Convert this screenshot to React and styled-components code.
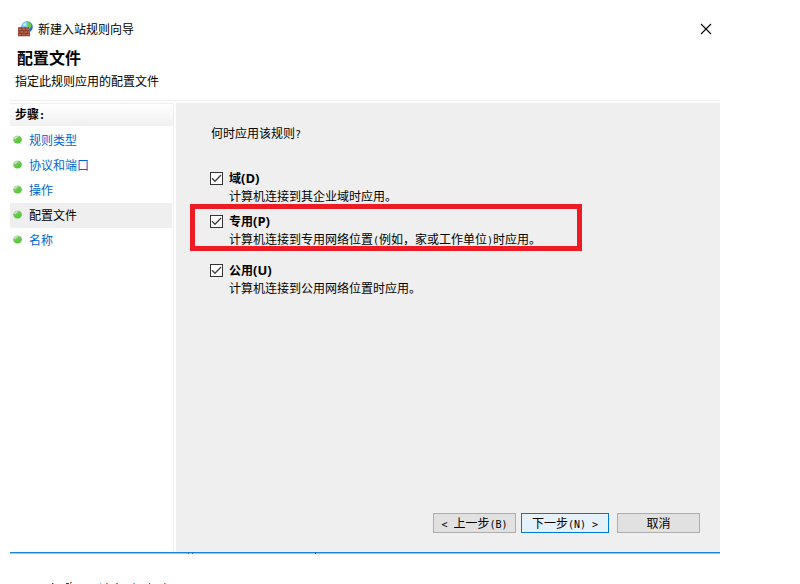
import React, { useState } from 'react';
import styled, { createGlobalStyle, css } from 'styled-components';

const GlobalStyle = createGlobalStyle`
  * {
    box-sizing: border-box;
  }

  body {
    margin: 0;
    background: #fff;
    color: #000;
    font-family: 'Noto Sans CJK SC', 'Liberation Sans', sans-serif;
    font-size: 12px;
    line-height: 18px;
  }
`;

const Page = styled.div`
  display: flex;
  flex-direction: column;
  min-height: 100vh;
  padding: 19px 80px 0 10px;
`;

const Wizard = styled.main`
  display: flex;
  flex: 1;
  flex-direction: column;
  border-bottom: 1px solid #1883d7;
  box-shadow: 0 1px 0 #bfbfbf;
`;

const TitleBar = styled.div`
  display: flex;
  align-items: center;
  gap: 5px;
  height: 20px;
  padding: 0 8px 0 7px;
`;

const Title = styled.span`
  flex: 1;
`;

const CloseButton = styled.button`
  display: flex;
  padding: 0;
  border: none;
  background: none;
`;

const Header = styled.header`
  padding: 6px 5px 10px;
  border-bottom: 1px solid #efefef;
`;

const Heading = styled.h1`
  margin: 0 0 3px;
  padding-left: 2px;
  font-size: 16px;
  font-weight: 700;
  line-height: 24px;
`;

const Text = styled.p`
  margin: 0;
`;

const Body = styled.div`
  display: flex;
  flex: 1;
  gap: 2px;
  padding-top: 2px;
`;

const Sidebar = styled.nav`
  width: 164px;
  border-right: 1px solid #efefef;
`;

const SidebarTitle = styled.h2`
  height: 23px;
  margin: 0 0 2px;
  padding-left: 5px;
  border-top: 1px solid #efefef;
  background: linear-gradient(#fff, #f0f0f0);
  font-size: 12px;
  font-weight: 700;
  line-height: 20px;
`;

const StepList = styled.ul`
  margin: 0;
  padding: 0 1px 0 0;
  list-style: none;
`;

const StepLink = styled.a`
  display: flex;
  align-items: center;
  gap: 7px;
  height: 25px;
  padding: 0 0 2px 3px;
  color: ${({ $active }) => ($active ? '#000' : '#0066cc')};
  background: ${({ $active }) => ($active ? '#efefef' : 'transparent')};
  text-decoration: none;
`;

const Content = styled.section`
  display: flex;
  flex: 1;
  flex-direction: column;
  padding: 21px 20px 19px 34px;
  background: #efefef;
`;

const Question = styled.p`
  margin: 0 0 27px;
  padding-left: 1px;
`;

const Option = styled.div`
  position: relative;
  display: grid;
  grid-template-columns: 13px 1fr;
  column-gap: 6px;
  align-items: center;
  margin-bottom: ${({ $gap }) => $gap}px;
`;

const CheckFrame = styled.span`
  display: grid;

  > * {
    grid-area: 1 / 1;
  }

  svg {
    pointer-events: none;
  }

  input:not(:checked) + svg {
    visibility: hidden;
  }
`;

const CheckInput = styled.input`
  appearance: none;
  width: 13px;
  height: 13px;
  margin: 0;
  border: 1px solid #333;
  background: #fff;
`;

const OptionLabel = styled.label`
  font-weight: 700;
`;

const AccessKey = styled.span`
  font-family: 'Open Sans', sans-serif;
  font-size: 13px;
  line-height: 1;
`;

const OptionHint = styled.p`
  grid-column: 2;
  margin: 0;
  line-height: 17px;
`;

// SimSun style half-width characters
const HalfWidth = styled.span`
  font-family: 'DejaVu Sans Mono', monospace;
  font-size: 10px;
  line-height: 1;
  white-space: pre;
`;

const Highlight = styled.span`
  position: absolute;
  top: -8px;
  bottom: -4px;
  left: -20px;
  width: 392px;
  border: 5px solid #ed1c24;
  pointer-events: none;
`;

const Actions = styled.div`
  display: flex;
  justify-content: flex-end;
  margin-top: auto;
`;

const Button = styled.button`
  min-width: 83px;
  height: 20px;
  margin-left: 8px;
  padding: 0 6px;
  border: 1px solid #adadad;
  background: #e1e1e1;
  color: #000;
  font: inherit;
  line-height: 18px;
  white-space: nowrap;

  ${({ $primary }) =>
    $primary &&
    css`
      min-width: 88px;
      margin-left: 5px;
      border-color: #0078d7;
      background: #e5f1fb;
    `}
`;

const Remnants = styled.svg`
  display: block;
`;

const FirewallIcon = () => (
  <svg width="16" height="16" viewBox="0 0 16 16" aria-hidden="true">
    <defs>
      <radialGradient id="globe" cx="0.35" cy="0.3" r="0.8">
        <stop offset="0" stopColor="#c4ecfc" />
        <stop offset="0.5" stopColor="#3f9fe4" />
        <stop offset="1" stopColor="#124ab0" />
      </radialGradient>
    </defs>
    <circle cx="10" cy="5.8" r="5.8" fill="url(#globe)" />
    <path d="M11 1l2 .8 1.6 2.6-1 1.6-1 1.6-1.4-1-.2-2-1-1z" fill="#6ccb3c" />
    <path d="M5.4 4l1.6-1.8 2 .4L7.5 5z" fill="#bfe8b0" />
    <path d="M1 6h11v3h1v6H1z" fill="#a0503c" />
    <path d="M1 6.5h2M4 6.5h3M8 6.5h3M2 8.5h3M6 8.5h3M10 8.5h2M1 11h2M4 11h3M8 11h4M2 13.5h3M6 13.5h3M10 13.5h2" stroke="#bd6c54" />
    <path d="M1 9.5h11M1 12.5h12M1 15h12M4.5 6v3M8.5 6v3M2.5 10v2M6.5 10v2M10.5 10v2M4.5 13v2M8.5 13v2" stroke="#6f3328" strokeWidth="0.5" />
  </svg>
);

const CloseIcon = () => (
  <svg width="12" height="12" viewBox="0 0 12 12" aria-hidden="true">
    <path d="M1 1l10 10M11 1L1 11" stroke="#000" strokeWidth="1.1" />
  </svg>
);

const Bullet = () => (
  <svg width="9" height="9" viewBox="0 0 9 9" aria-hidden="true">
    <defs>
      <linearGradient id="bullet" x1="0" y1="0" x2="0.7" y2="1">
        <stop offset="0" stopColor="#d3e6cd" />
        <stop offset="0.5" stopColor="#72c65a" />
        <stop offset="1" stopColor="#46cc24" />
      </linearGradient>
    </defs>
    <ellipse cx="4.5" cy="4.5" rx="4.4" ry="4" fill="url(#bullet)" />
    <path d="M1.8 4Q2.2 2 4.5 1.8" fill="none" stroke="#e6f2e2" />
  </svg>
);

const Checkbox = ({ id, checked, onChange }) => (
  <CheckFrame>
    <CheckInput id={id} type="checkbox" checked={checked} onChange={onChange} />
    <svg width="13" height="13" viewBox="0 0 13 13" aria-hidden="true">
      <path d="M2 6.3l3 3L11 3" fill="none" stroke="#404040" strokeWidth="1.3" />
    </svg>
  </CheckFrame>
);

const STEPS = ['规则类型', '协议和端口', '操作', '配置文件', '名称'];

const PROFILES = [
  { id: 'domain', name: '域', key: '(D)', gap: 8, hint: '计算机连接到其企业域时应用。' },
  {
    id: 'private',
    name: '专用',
    key: '(P)',
    gap: 14,
    marked: true,
    hint: (
      <>
        计算机连接到专用网络位置<HalfWidth>(</HalfWidth>例如，家或工作单位<HalfWidth>)</HalfWidth>时应用。
      </>
    ),
  },
  { id: 'public', name: '公用', key: '(U)', gap: 0, hint: '计算机连接到公用网络位置时应用。' },
];

const App = () => {
  const [selected, setSelected] = useState({ domain: true, private: true, public: true });

  const toggle = (id) => setSelected((prev) => ({ ...prev, [id]: !prev[id] }));

  return (
    <>
      <GlobalStyle />
      <Page>
        <Wizard>
          <TitleBar>
            <FirewallIcon />
            <Title>新建入站规则向导</Title>
            <CloseButton type="button" aria-label="关闭">
              <CloseIcon />
            </CloseButton>
          </TitleBar>
          <Header>
            <Heading>配置文件</Heading>
            <Text>指定此规则应用的配置文件</Text>
          </Header>
          <Body>
            <Sidebar>
              <SidebarTitle>
                步骤<HalfWidth>:</HalfWidth>
              </SidebarTitle>
              <StepList>
                {STEPS.map((step) => (
                  <li key={step}>
                    <StepLink href="#" $active={step === '配置文件'}>
                      <Bullet />
                      {step}
                    </StepLink>
                  </li>
                ))}
              </StepList>
            </Sidebar>
            <Content>
              <Question>
                何时应用该规则<HalfWidth>?</HalfWidth>
              </Question>
              {PROFILES.map(({ id, name, key, gap, marked, hint }) => (
                <Option key={id} $gap={gap}>
                  <Checkbox id={id} checked={selected[id]} onChange={() => toggle(id)} />
                  <OptionLabel htmlFor={id}>
                    {name}
                    <AccessKey>{key}</AccessKey>
                  </OptionLabel>
                  <OptionHint>{hint}</OptionHint>
                  {marked && <Highlight />}
                </Option>
              ))}
              <Actions>
                <Button type="button">
                  <HalfWidth>{'< '}</HalfWidth>上一步<HalfWidth>(B)</HalfWidth>
                </Button>
                <Button type="button" $primary>
                  下一步<HalfWidth>{'(N) >'}</HalfWidth>
                </Button>
                <Button type="button">取消</Button>
              </Actions>
            </Content>
          </Body>
        </Wizard>
        {/* tops of the glyphs that show below the window */}
        <Remnants width="320" height="31" viewBox="0 0 320 31" aria-hidden="true">
          <path d="M178 .5h1M182 .5h1" stroke="#55606a" />
          <path d="M305 .5h1" stroke="#3a2a20" />
          <path d="M42 30.5h1M56 30.5h3M139 30.5h1" stroke="#3c3c4c" />
          <path d="M60 29.5h2M60 30.5h1M96 30.5h1M106 30.5h2M154 30.5h1" stroke="#a87850" />
          <path d="M43 30.5h1M90 30.5h1M97 30.5h1M123 30.5h2M155 30.5h1" stroke="#7cb4d8" />
        </Remnants>
      </Page>
    </>
  );
};

export default App;
